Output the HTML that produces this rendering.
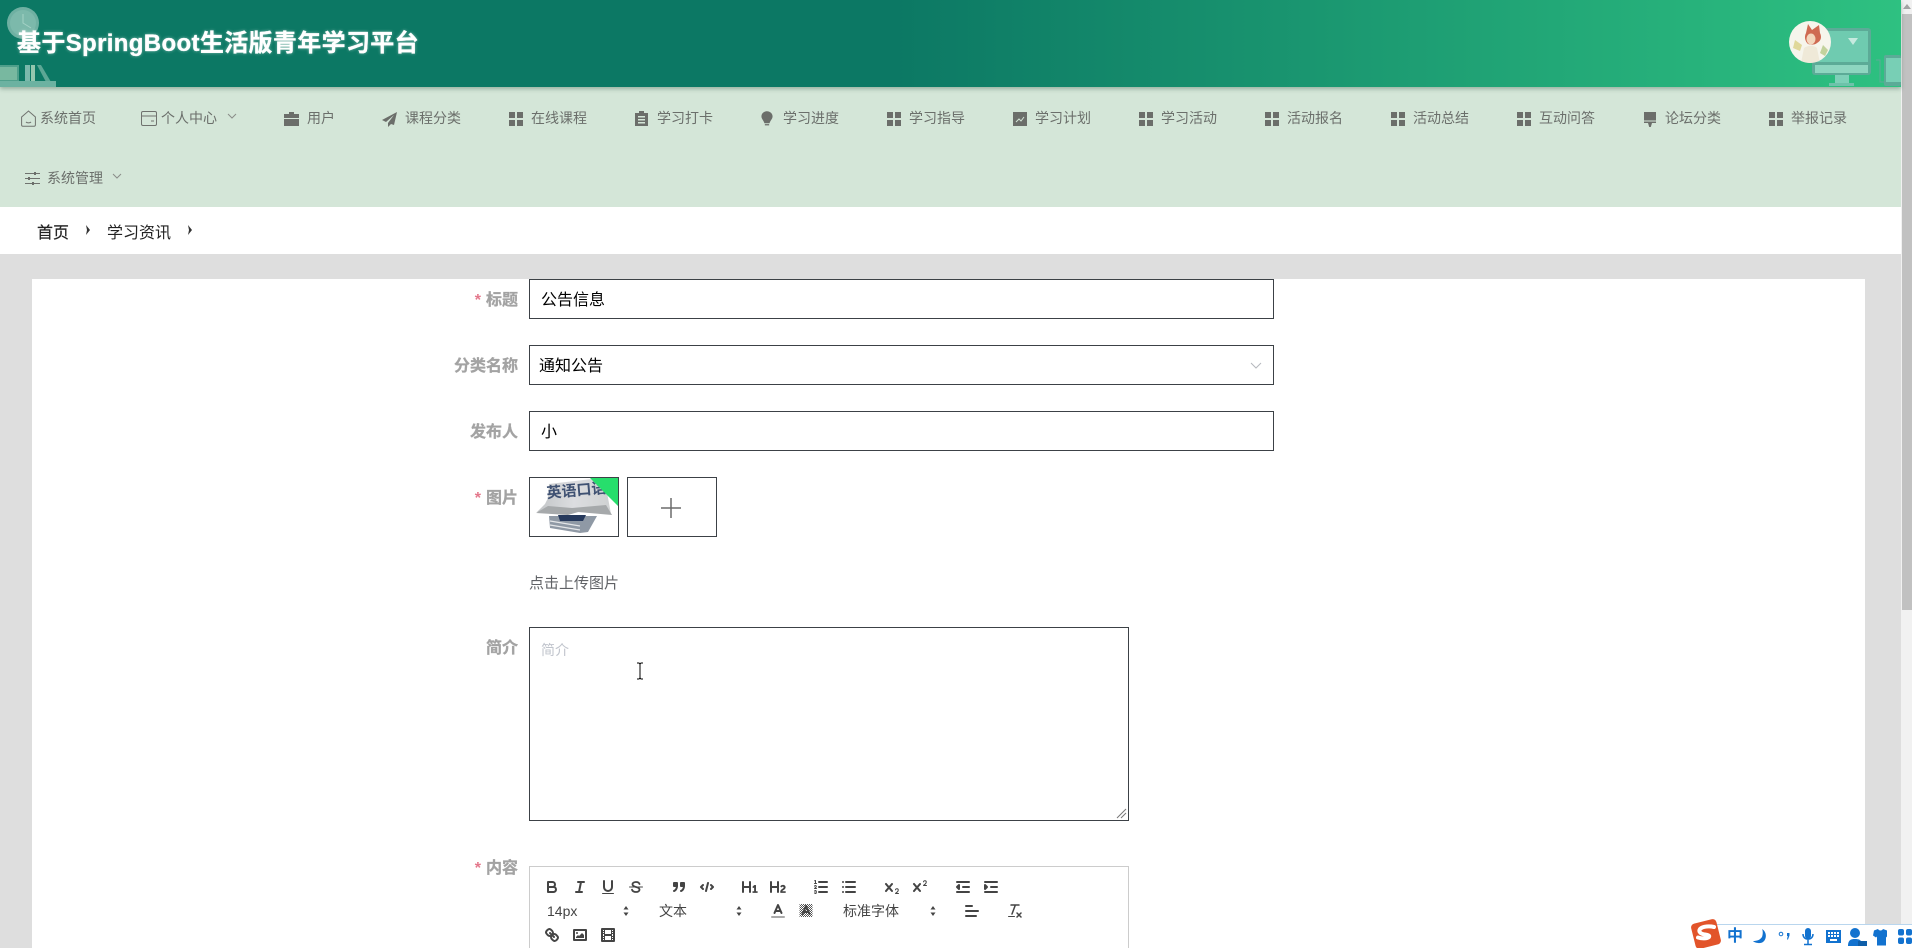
<!DOCTYPE html>
<html lang="zh-CN"><head><meta charset="utf-8"><title>基于SpringBoot生活版青年学习平台</title>
<style>
html,body{margin:0;padding:0;width:1912px;height:948px;overflow:hidden;background:#dedede}
body{position:relative;font-family:"Liberation Sans","Noto Sans CJK SC",sans-serif}
.a,.n,.l,.i,svg{position:absolute}
.n{top:108px;height:20px;line-height:20px;font-size:14px;color:#6b6f6b;white-space:nowrap}
.l{font-size:16px;font-weight:700;color:#a3a3a3;line-height:24px;white-space:nowrap;text-align:right;right:1394px;-webkit-text-stroke:.3px #a3a3a3}
.l b{color:#e4788c;font-weight:700;margin-right:5px;-webkit-text-stroke:0}
.i{left:529px;width:743px;height:38px;background:#fff;border:1px solid #3c4146;line-height:42px;font-size:16px;color:#000}
.g{fill:#6b6e6a}
.q{fill:none;stroke:#444;stroke-width:2;stroke-linecap:round;stroke-linejoin:round}
.q .t{stroke-width:1}
.q .f{fill:#444;stroke:none}
.q .ff{fill:#444}
.st{fill:#444;stroke:none}
</style></head>
<body>
<!-- header -->
<div class="a" style="left:0;top:0;width:1901px;height:87px;background:linear-gradient(90deg,#0c7864 0%,#0c7864 47%,#2ec181 100%);box-shadow:0 2px 4px rgba(40,80,60,.35);z-index:2;overflow:hidden">
<svg style="left:0;top:0" width="70" height="87" viewBox="0 0 70 87">
<circle cx="23" cy="23" r="16" fill="#6fb0a2"/><circle cx="23" cy="23" r="13" fill="#7cb9ab"/><path d="M23 14v9l8 5" stroke="#a4d2c6" stroke-width="1" fill="none"/>
<rect x="0" y="65" width="19" height="17" fill="#4f9f8b"/><rect x="0" y="67" width="17" height="13" fill="#78b8a0"/>
<rect x="25" y="65" width="5" height="17" fill="#7ab8ab"/><rect x="31" y="65" width="4" height="17" fill="#94c7ae"/><path d="M37 65h4l10 17h-5z" fill="#5da795"/>
<rect x="0" y="81" width="56" height="6" fill="#6cb2a1"/>
</svg>
<svg style="left:1805px;top:20px" width="96" height="67" viewBox="1805 20 96 67">
<rect x="1812" y="28" width="59" height="47" rx="3" fill="#5cab97"/><rect x="1815" y="31" width="53" height="31" fill="#6fcbb0"/><rect x="1815" y="65" width="53" height="8" fill="#8ed6c0"/>
<path d="M1848 38h10l-5 7z" fill="#c6eadf"/>
<rect x="1835" y="75" width="14" height="8" fill="#7ed0b8"/><rect x="1829" y="83" width="25" height="3" fill="#6ec2aa"/>
<path d="M1876 60h4v22h4" fill="none" stroke="#5cab97"/>
<rect x="1884" y="55" width="17" height="31" rx="2" fill="#5cab97"/><rect x="1886" y="58" width="15" height="24" fill="#78cfb5"/>
</svg>
<svg style="left:1789px;top:21px" width="42" height="42" viewBox="0 0 42 42">
<defs><clipPath id="av"><circle cx="21" cy="21" r="21"/></clipPath></defs>
<circle cx="21" cy="21" r="21" fill="#f6f5ec"/>
<g clip-path="url(#av)"><path d="M17 12l2-9 4 6 7-5 1 8c2 4 1 8-3 10-2 2-6 2-9 1-3-3-4-7-2-11z" fill="#cf6a52"/><ellipse cx="22" cy="18" rx="4.500" ry="5.500" fill="#f3d6bc"/><path d="M15 27c4-3 10-3 13 0l3 15H12z" fill="#efe9d8"/><path d="M6 19l7 5-2 6-7-3z" fill="#e0d89a"/><path d="M34 24l-3 8 5 3 3-6z" fill="#c2d29c"/></g>
</svg>
<div class="a" style="left:17px;top:26px;font-size:24px;line-height:36px;font-weight:700;color:#fff;white-space:nowrap;letter-spacing:.35px;-webkit-text-stroke:.3px #fff;text-shadow:0 0 3px rgba(255,255,255,.5)">基于SpringBoot生活版青年学习平台</div>
</div>
<!-- nav -->
<div class="a" style="left:0;top:87px;width:1901px;height:120px;background:#d4e6d8"></div>
<svg style="left:21px;top:110px" width="15" height="17" viewBox="0 0 15 17"><path d="M.6 7L7.500 1l6.900 6v8a1.200 1.200 0 0 1-1.200 1.200H1.800A1.200 1.200 0 0 1 .6 15zM5 12c1 1.200 4 1.200 5 0" fill="none" stroke="#6f726e" stroke-width="1"/></svg>
<div class="n" style="left:40px">系统首页</div>
<svg style="left:141px;top:111px" width="16" height="15" viewBox="0 0 16 15"><rect x=".5" y=".5" width="15" height="14" rx="1.500" fill="none" stroke="#6f726e"/><path d="M.5 5h15M10 10h3" stroke="#6f726e" fill="none"/></svg>
<div class="n" style="left:161px">个人中心</div>
<svg style="left:227px;top:113px" width="10" height="7" viewBox="0 0 10 7"><path d="M1 1l4 4 4-4" fill="none" stroke="#8a8d89"/></svg>
<svg style="left:284px;top:112px" width="15" height="14" viewBox="0 0 15 14"><path class="g" d="M5 0h5v2h5v4H0V2h5zM0 7h15v7H0z"/></svg>
<div class="n" style="left:307px">用户</div>
<svg style="left:382px;top:112px" width="15" height="15" viewBox="0 0 15 15"><path class="g" d="M15 0L0 8l4 2L12 3 6 11v4l3-3 3 1z"/></svg>
<div class="n" style="left:405px">课程分类</div>
<svg style="left:509px;top:112px" width="14" height="14" viewBox="0 0 14 14"><path class="g" d="M0 0h6v6H0zM8 0h6v6H8zM0 8h6v6H0zM8 8h6v6H8z"/></svg>
<div class="n" style="left:531px">在线课程</div>
<svg style="left:635px;top:111px" width="13" height="15" viewBox="0 0 13 15"><path class="g" d="M4 0h5v2h4v13H0V2h4zM3 5v1.500h7V5zM3 8v1.500h7V8zM3 11v1.500h7V11z" fill-rule="evenodd"/></svg>
<div class="n" style="left:657px">学习打卡</div>
<svg style="left:761px;top:110px" width="12" height="17" viewBox="0 0 14 17"><path class="g" d="M7 0c4 0 6.500 3 6.500 6 0 3-2.500 4.500-3.500 8H4C3 10.500.5 9 .5 6 .5 3 3 0 7 0zM4.500 15h5v1.500h-5z"/></svg>
<div class="n" style="left:783px">学习进度</div>
<svg style="left:887px;top:112px" width="14" height="14" viewBox="0 0 14 14"><path class="g" d="M0 0h6v6H0zM8 0h6v6H8zM0 8h6v6H0zM8 8h6v6H8z"/></svg>
<div class="n" style="left:909px">学习指导</div>
<svg style="left:1013px;top:112px" width="14" height="14" viewBox="0 0 14 14"><rect width="14" height="14" class="g"/><path d="M3 10l3-3 2 2 3-4" fill="none" stroke="#d4e6d8"/></svg>
<div class="n" style="left:1035px">学习计划</div>
<svg style="left:1139px;top:112px" width="14" height="14" viewBox="0 0 14 14"><path class="g" d="M0 0h6v6H0zM8 0h6v6H8zM0 8h6v6H0zM8 8h6v6H8z"/></svg>
<div class="n" style="left:1161px">学习活动</div>
<svg style="left:1265px;top:112px" width="14" height="14" viewBox="0 0 14 14"><path class="g" d="M0 0h6v6H0zM8 0h6v6H8zM0 8h6v6H0zM8 8h6v6H8z"/></svg>
<div class="n" style="left:1287px">活动报名</div>
<svg style="left:1391px;top:112px" width="14" height="14" viewBox="0 0 14 14"><path class="g" d="M0 0h6v6H0zM8 0h6v6H8zM0 8h6v6H0zM8 8h6v6H8z"/></svg>
<div class="n" style="left:1413px">活动总结</div>
<svg style="left:1517px;top:112px" width="14" height="14" viewBox="0 0 14 14"><path class="g" d="M0 0h6v6H0zM8 0h6v6H8zM0 8h6v6H0zM8 8h6v6H8z"/></svg>
<div class="n" style="left:1539px">互动问答</div>
<svg style="left:1644px;top:112px" width="12" height="15" viewBox="0 0 12 15"><path class="g" d="M0 0h12v8.500H0zM0 9.500h12V11H8l-1.200 4H5.200L4 11H0z"/></svg>
<div class="n" style="left:1665px">论坛分类</div>
<svg style="left:1769px;top:112px" width="14" height="14" viewBox="0 0 14 14"><path class="g" d="M0 0h6v6H0zM8 0h6v6H8zM0 8h6v6H0zM8 8h6v6H8z"/></svg>
<div class="n" style="left:1791px">举报记录</div>
<svg style="left:25px;top:172px" width="15" height="13" viewBox="0 0 15 13"><path d="M0 1.500h15M0 6.500h15M0 11.500h15" stroke="#6f726e" fill="none"/><path class="g" d="M9 0h2v3H9zM3 5h2v3H3zM7 10h2v3H7z"/></svg>
<div class="n" style="left:47px;top:168px">系统管理</div>
<svg style="left:112px;top:173px" width="10" height="7" viewBox="0 0 10 7"><path d="M1 1l4 4 4-4" fill="none" stroke="#8a8d89"/></svg>
<!-- breadcrumb -->
<div class="a" style="left:0;top:207px;width:1901px;height:47px;background:#fff"></div>
<div class="a" style="left:37px;top:222px;font-size:16px;line-height:24px;color:#222;-webkit-text-stroke:.2px #222">首页</div>
<svg style="left:85px;top:225px" width="6" height="10" viewBox="0 0 6 10"><path d="M1 0l4 5-4 5 1-5z" fill="#333"/></svg>
<div class="a" style="left:107px;top:222px;font-size:16px;line-height:24px;color:#222">学习资讯</div>
<svg style="left:187px;top:225px" width="6" height="10" viewBox="0 0 6 10"><path d="M1 0l4 5-4 5 1-5z" fill="#333"/></svg>
<!-- card -->
<div class="a" style="left:32px;top:279px;width:1833px;height:669px;background:#fff"></div>
<div class="l" style="top:289px"><b>*</b>标题</div>
<div class="i" style="top:279px"><span style="margin-left:11px">公告信息</span></div>
<div class="l" style="top:355px">分类名称</div>
<div class="i" style="top:345px"><span style="margin-left:9px">通知公告</span></div>
<svg style="left:1250px;top:362px" width="12" height="8" viewBox="0 0 12 8"><path d="M1 1l5 5 5-5" fill="none" stroke="#b5b8bd"/></svg>
<div class="l" style="top:421px">发布人</div>
<div class="i" style="top:411px"><span style="margin-left:11px">小</span></div>
<div class="l" style="top:487px"><b>*</b>图片</div>
<div class="a" style="left:529px;top:477px;width:88px;height:58px;border:1px solid #3c4146;background:#fff"></div>
<svg style="left:530px;top:478px;overflow:hidden" width="88" height="58" viewBox="0 0 88 58">
<defs><linearGradient id="pg" x1="0" y1="0" x2="1" y2="0"><stop offset="0" stop-color="#c2c5c7"/><stop offset=".5" stop-color="#dcdde0"/><stop offset="1" stop-color="#cfd1d2"/></linearGradient></defs>
<path d="M19 6L62 1l14 8 5 27-32-2-8 2-34-2 8-8 3-6z" fill="url(#pg)"/><path d="M6 35l12-7 24 2 34-3 6 10-34-3-10 3z" fill="#a6a9ab"/>
<path d="M19 38h44l4 0-9 16-8 1-30-5z" fill="#8f99a5"/><path d="M28 37h28l-3 6H30z" fill="#26395c"/><path d="M20 43l30 5M20 47l30 5" stroke="#e4e6e8" stroke-width="1.200"/>
<text x="17" y="20" font-size="15" font-weight="700" fill="#3f5172" font-family="'Liberation Sans','Noto Sans CJK SC',sans-serif" transform="rotate(-5 17 20)">英语口语</text>
<path d="M60 0h28v28z" fill="#27de6c"/>
</svg>
<div class="a" style="left:627px;top:477px;width:88px;height:58px;border:1px solid #3c4146;background:#fff"></div>
<svg style="left:661px;top:498px" width="20" height="20" viewBox="0 0 20 20"><path d="M10 0v20M0 10h20" stroke="#6b6b6b" stroke-width="1.500" fill="none"/></svg>
<div class="a" style="left:529px;top:573px;font-size:15px;line-height:22px;color:#606266;white-space:nowrap">点击上传图片</div>
<div class="l" style="top:637px">简介</div>
<div class="a" style="left:529px;top:627px;width:598px;height:192px;border:1px solid #3c4146;background:#fff"></div>
<div class="a" style="left:541px;top:639px;font-size:14px;line-height:22px;color:#c0c4cc">简介</div>
<svg style="left:1116px;top:808px" width="11" height="11" viewBox="0 0 11 11"><path d="M1 10l9-9M5 10l5-5" stroke="#777" fill="none"/></svg>
<svg style="left:636px;top:662px" width="9" height="18" viewBox="0 0 9 18"><path d="M1 1h2l1 1 1-1h2M4 2v14M1 17h2l1-1 1 1h2" fill="none" stroke="#000"/></svg>
<div class="l" style="top:857px"><b>*</b>内容</div>
<div class="a" style="left:529px;top:866px;width:598px;height:90px;border:1px solid #ccc;background:#fff"></div>
<!-- quill toolbar -->
<svg class="q" style="left:543px;top:878px" width="18" height="18" viewBox="0 0 18 18"><path d="M5,4H9.500A2.500,2.500,0,0,1,12,6.500v0A2.500,2.500,0,0,1,9.500,9H5A0,0,0,0,1,5,9V4A0,0,0,0,1,5,4Z"/><path d="M5,9h5.500A2.500,2.500,0,0,1,13,11.500v0A2.500,2.500,0,0,1,10.500,14H5a0,0,0,0,1,0,0V9A0,0,0,0,1,5,9Z"/></svg>
<svg class="q" style="left:571px;top:878px" width="18" height="18" viewBox="0 0 18 18"><path d="M7 4h6M5 14h6M8 14l2-10"/></svg>
<svg class="q" style="left:599px;top:878px" width="18" height="18" viewBox="0 0 18 18"><path d="M5,3V9a4,4,0,0,0,4,4H9a4,4,0,0,0,4-4V3"/><rect class="f" height="1" rx=".5" width="12" x="3" y="15"/></svg>
<svg class="q" style="left:627px;top:878px" width="18" height="18" viewBox="0 0 18 18"><path style="stroke-width:1.800" d="M12.500 6C12 4.500 10.500 4 9 4 7 4 5.500 5 5.500 6.300c0 1.300 1.500 2.200 3.500 2.700 2 .5 3.500 1.400 3.500 2.700 0 1.300-1.500 2.300-3.500 2.300-2 0-3.500-.8-4-2.300"/><path class="t" d="M2.500 9h13"/></svg>
<svg class="q" style="left:670px;top:878px" width="18" height="18" viewBox="0 0 18 18"><rect class="ff" height="3" width="3" x="4" y="5"/><rect class="ff" height="3" width="3" x="11" y="5"/><path d="M7,8c0,4.031-3,5-3,5"/><path d="M14,8c0,4.031-3,5-3,5"/></svg>
<svg class="q" style="left:698px;top:878px" width="18" height="18" viewBox="0 0 18 18"><path d="M5 7L3 9l2 2M13 7l2 2-2 2M10 5l-2 8"/></svg>
<svg class="q" style="left:741px;top:878px" width="18" height="18" viewBox="0 0 18 18"><path class="f" d="M10,4V14a1,1,0,0,1-2,0V10H3v4a1,1,0,0,1-2,0V4A1,1,0,0,1,3,4V8H8V4a1,1,0,0,1,2,0Zm6.068,9.209H14.990V7.599a.541.541,0,0,0-.605-.605h-.627a1.011,1.011,0,0,0-.748.297L11.645,8.566a.544.544,0,0,0-.022.858l.286.308a.539.539,0,0,0,.847.033l.099-.088a1.214,1.214,0,0,0,.242-.353h.022s-.011.309-.011.605V13.209H12.041a.541.541,0,0,0-.605.605v.44a.541.541,0,0,0,.605.605h4.027a.541.541,0,0,0,.605-.605v-.44A.541.541,0,0,0,16.068,13.209Z"/></svg>
<svg class="q" style="left:769px;top:878px" width="18" height="18" viewBox="0 0 18 18"><path class="f" d="M16.740,13.814v.44a.541.541,0,0,1-.605.605H11.855a.584.584,0,0,1-.649-.605V14.013c0-2.905,3.399-3.422,3.399-4.555a.777.777,0,0,0-.847-.781,1.177,1.177,0,0,0-.836.385c-.275.264-.561.374-.858.132l-.429-.341c-.308-.242-.385-.518-.154-.814a2.972,2.972,0,0,1,2.454-1.177,2.454,2.454,0,0,1,2.684,2.409c0,2.453-3.179,2.927-3.278,3.938h2.794A.541.541,0,0,1,16.740,13.814ZM9,3A1,1,0,0,0,8,4V8H3V4A1,1,0,0,0,1,4V14a1,1,0,0,0,2,0V10H8v4a1,1,0,0,0,2,0V4A1,1,0,0,0,9,3Z"/></svg>
<svg class="q" style="left:812px;top:878px" width="18" height="18" viewBox="0 0 18 18"><path d="M7 4h8M7 9h8M7 14h8"/><path class="t" d="M2.500 5.500h2"/><path class="f" d="M3.500,6A.5.5,0,0,1,3,5.500V3.085l-.276.138A.5.5,0,0,1,2.053,3c-.124-.247-.023-.324.224-.447l1-.5A.5.5,0,0,1,4,2.500v3A.5.5,0,0,1,3.500,6Z"/><path class="t" d="M4.500,10.500h-2c0-.234,1.850-1.076,1.850-2.234A.959.959,0,0,0,2.500,8.156"/><path class="t" d="M2.500,14.846a.959.959,0,0,0,1.850-.109A.7.7,0,0,0,3.750,14a.688.688,0,0,0,.6-.736.959.959,0,0,0-1.850-.109"/></svg>
<svg class="q" style="left:840px;top:878px" width="18" height="18" viewBox="0 0 18 18"><path d="M6 4h9M6 9h9M6 14h9M3 4h0M3 9h0M3 14h0"/></svg>
<svg class="q" style="left:883px;top:878px" width="18" height="18" viewBox="0 0 18 18"><path class="f" d="M15.500,15H13.861a3.858,3.858,0,0,0,1.914-2.975,1.800,1.800,0,0,0-1.600-1.751A1.921,1.921,0,0,0,12.021,11.700a.5.5,0,1,0,.957.291.914.914,0,0,1,1.053-.725.81.81,0,0,1,.744.762c0,1.076-1.170,1.870-1.940,2.431A1.456,1.456,0,0,0,12,15.500a.5.5,0,0,0,.5.5h3A.5.5,0,0,0,15.500,15Z"/><path class="f" d="M9.651,5.241a1,1,0,0,0-1.410.108L6,7.964,3.759,5.349a1,1,0,1,0-1.519,1.300L4.683,9.500,2.241,12.350a1,1,0,1,0,1.519,1.300L6,11.036,8.241,13.650a1,1,0,0,0,1.519-1.300L7.317,9.500,9.759,6.651A1,1,0,0,0,9.651,5.241Z"/></svg>
<svg class="q" style="left:911px;top:878px" width="18" height="18" viewBox="0 0 18 18"><path class="f" d="M15.500,7H13.861a4.015,4.015,0,0,0,1.914-2.975,1.800,1.800,0,0,0-1.600-1.751A1.922,1.922,0,0,0,12.021,3.700a.5.5,0,1,0,.957.291.917.917,0,0,1,1.053-.725.81.81,0,0,1,.744.762c0,1.077-1.164,1.925-1.934,2.486A1.423,1.423,0,0,0,12,7.500a.5.5,0,0,0,.5.5h3A.5.5,0,0,0,15.500,7Z"/><path class="f" d="M9.651,5.241a1,1,0,0,0-1.410.108L6,7.964,3.759,5.349a1,1,0,1,0-1.519,1.300L4.683,9.500,2.241,12.350a1,1,0,1,0,1.519,1.300L6,11.036,8.241,13.650a1,1,0,0,0,1.519-1.300L7.317,9.500,9.759,6.651A1,1,0,0,0,9.651,5.241Z"/></svg>
<svg class="q" style="left:954px;top:878px" width="18" height="18" viewBox="0 0 18 18"><path d="M3 14h12M3 4h12M9 9h6"/><path class="ff" d="M5 7v4L3 9z"/></svg>
<svg class="q" style="left:982px;top:878px" width="18" height="18" viewBox="0 0 18 18"><path d="M3 14h12M3 4h12M9 9h6"/><path class="ff" d="M3 7v4l2-2z"/></svg>
<div class="a" style="left:547px;top:902px;font-size:14px;line-height:18px;color:#444">14px</div>
<svg style="left:617px;top:902px" width="18" height="18" viewBox="0 0 18 18"><path class="st" d="M6.500 10.500h5L9 14zM6.500 7.500h5L9 4z"/></svg>
<div class="a" style="left:659px;top:902px;font-size:14px;line-height:18px;color:#444">文本</div>
<svg style="left:730px;top:902px" width="18" height="18" viewBox="0 0 18 18"><path class="st" d="M6.500 10.500h5L9 14zM6.500 7.500h5L9 4z"/></svg>
<svg class="q" style="left:769px;top:902px" width="18" height="18" viewBox="0 0 18 18"><path d="M3 15h12" style="stroke:#aaa"/><path d="M5.500 11L9 3l3.500 8M11.630 9H6.380"/></svg>
<svg style="left:797px;top:902px" width="18" height="18" viewBox="0 0 18 18"><defs><pattern id="h" width="2" height="2" patternUnits="userSpaceOnUse"><rect width="1" height="1" fill="#555" stroke="none"/><rect x="1" y="1" width="1" height="1" fill="#555" stroke="none"/></pattern></defs><rect x="2.500" y="2" width="13" height="13" fill="url(#h)"/><path d="M5.500 12L9 4l3.500 8M11.630 10H6.380" fill="none" stroke="#444" stroke-width="2" stroke-linecap="round" stroke-linejoin="round"/></svg>
<div class="a" style="left:843px;top:902px;font-size:14px;line-height:18px;color:#444;white-space:nowrap">标准字体</div>
<svg style="left:924px;top:902px" width="18" height="18" viewBox="0 0 18 18"><path class="st" d="M6.500 10.500h5L9 14zM6.500 7.500h5L9 4z"/></svg>
<svg class="q" style="left:963px;top:902px" width="18" height="18" viewBox="0 0 18 18"><path d="M3 9h12M3 14h10M3 4h6"/></svg>
<svg class="q" style="left:1006px;top:902px" width="18" height="18" viewBox="0 0 18 18"><path style="stroke-width:1.500" d="M5 3h8M6 12l3.350-9M11 11l4 4M15 11l-4 4"/><rect class="f" height="1" rx=".5" width="7" x="2" y="14"/></svg>
<svg class="q" style="left:543px;top:926px" width="18" height="18" viewBox="0 0 18 18"><path d="M7 7l4 4"/><path d="M8.900,4.577a3.476,3.476,0,0,1,.36,4.679A3.476,3.476,0,0,1,4.577,8.900C3.185,7.500,2.035,6.400,4.217,4.217S7.500,3.185,8.900,4.577Z"/><path d="M13.423,9.100a3.476,3.476,0,0,0-4.679-.36,3.476,3.476,0,0,0,.36,4.679c1.392,1.392,2.500,2.542,4.679.36S14.815,10.500,13.423,9.100Z"/></svg>
<svg class="q" style="left:571px;top:926px" width="18" height="18" viewBox="0 0 18 18"><rect height="10" width="12" x="3" y="4"/><circle class="f" cx="6" cy="7" r="1"/><path class="f" d="M5 12v-1l2-2 1 1 3-3 2 2v3z"/></svg>
<svg class="q" style="left:599px;top:926px" width="18" height="18" viewBox="0 0 18 18"><rect height="12" width="12" x="3" y="3"/><path class="f" d="M5 3h1v12H5zM12 3h1v12h-1zM5 8h8v2H5zM3 5h3v1H3zM3 7h3v1H3zM3 10h3v1H3zM3 12h3v1H3zM12 5h3v1h-3zM12 7h3v1h-3zM12 10h3v1h-3zM12 12h3v1h-3z"/></svg>
<!-- scrollbar -->
<div class="a" style="left:1901px;top:0;width:11px;height:948px;background:#f1f1f1"></div>
<div class="a" style="left:1902px;top:14px;width:10px;height:596px;background:#c1c1c1"></div>
<svg style="left:1902px;top:3px" width="10" height="7" viewBox="0 0 10 7"><path d="M5 1l4 5H1z" fill="#a3a3a3"/></svg>
<!-- IME bar -->
<div class="a" style="left:1715px;top:924px;width:197px;height:24px;background:#fff;border-top:1px solid #b9d6ee;box-sizing:border-box"></div>
<svg style="left:1690px;top:918px" width="34" height="30" viewBox="0 0 34 30"><rect x="3" y="3" width="26" height="26" rx="4" transform="rotate(-14 16 16)" fill="#e2542a"/><path d="M24 9c-4-1-11-1-14 2-2 3 1 5 5 5.500 3 .5 5 1 4 2.500-2 2-8 1.500-11 .5" fill="none" stroke="#fff" stroke-width="4" stroke-linecap="round"/></svg>
<div class="a" style="left:1727px;top:927px;font-size:16px;line-height:20px;font-weight:700;color:#1272cf">中</div>
<svg style="left:1752px;top:928px" width="135" height="18" viewBox="1752 928 135 18" fill="#1272cf">
<path d="M1762 929c5 3 5 10 1 13-3 2-8 1-10-1 4 0 7-1 9-4 1-3 1-6 0-8z"/>
<circle cx="1781" cy="934" r="1.800" fill="none" stroke="#1272cf"/><path d="M1787 933h2.500v2.500l-1.500 4-1 0 .7-3.500h-.7z"/>
<rect x="1805" y="928" width="6" height="11" rx="3"/><path d="M1803 934c0 7 10 7 10 0M1808 940v4M1804 944.500h8" fill="none" stroke="#1272cf" stroke-width="1.500"/>
<path fill-rule="evenodd" d="M1826 930h15v13h-15zM1828 932v2h2v-2zM1831 932v2h2v-2zM1834 932v2h2v-2zM1837 932v2h2v-2zM1828 935v2h2v-2zM1831 935v2h2v-2zM1834 935v2h2v-2zM1837 935v2h2v-2zM1830 939v2h7v-2z"/>
<circle cx="1855" cy="933" r="5"/><path d="M1848 946c0-6 3-7 7-7s6 1 6 3v4z"/><rect x="1858" y="941" width="9" height="6" fill="#0f5ea8"/>
<path d="M1874 930.500l4-1.500c1 2 4 2 5 0l4 1.500 3 5-3 2-1-1v9h-9v-9l-1 1-3-2z"/>
</svg>
<svg style="left:1898px;top:929px" width="14" height="16" viewBox="0 0 14 16" fill="#1272cf"><rect width="6" height="6.500" rx="2"/><rect x="8" width="6" height="6.500" rx="2"/><rect y="8.500" width="6" height="6.500" rx="2"/><rect x="8" y="8.500" width="6" height="6.500" rx="2"/></svg>
</body></html>
